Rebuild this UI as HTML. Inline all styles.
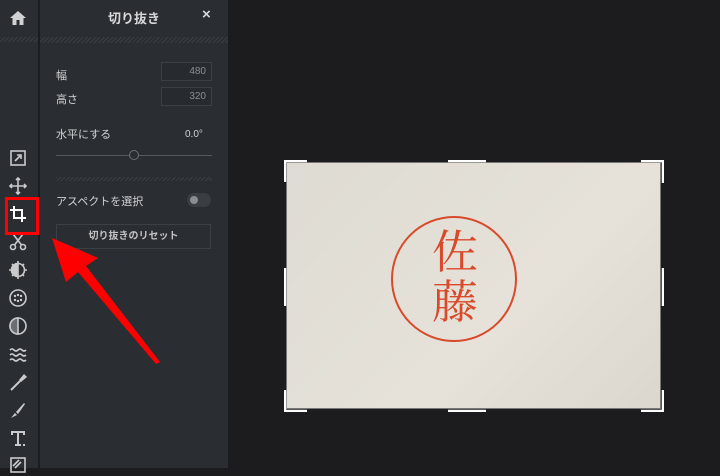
<!DOCTYPE html>
<html><head><meta charset="utf-8"><style>
body{margin:0;width:720px;height:468px;overflow:hidden;background:#1c1c1e;font-family:"Liberation Sans","Noto Sans CJK JP",sans-serif;position:relative}
.a{position:absolute}
#bar{left:0;top:0;width:38px;height:468px;background:#2a2d32;border-right:2px solid #1c1d20}
#panel{left:40px;top:0;width:188px;height:468px;background:#2a2d32}
.hatch{background:repeating-linear-gradient(135deg,#3a3d42 0 1px,#2a2d32 1px 3px)}
.lbl{color:#d0d2d4;font-size:11px}
.inp{border:1px solid #3c3f44;background:#272a2e;color:#8a8d91;font-size:10px;text-align:right;padding-right:5px;box-sizing:border-box;line-height:17px}
svg.i{position:absolute;left:8px;width:20px;height:20px}
</style></head><body>
<div id="bar" class="a"></div>
<div class="a hatch" style="left:0;top:37px;width:38px;height:5px"></div>
<div id="panel" class="a"></div>
<div class="a hatch" style="left:40px;top:37px;width:188px;height:6px"></div>
<div class="a" style="left:40px;top:8px;width:188px;text-align:center;color:#d6d8da;font-weight:bold;font-size:13px">切り抜き</div>
<div class="a" style="left:202px;top:6px;color:#d6d8da;font-size:15px;font-weight:bold">×</div>
<div class="a lbl" style="left:56px;top:67px">幅</div>
<div class="a inp" style="left:161px;top:62px;width:51px;height:19px">480</div>
<div class="a lbl" style="left:56px;top:91px">高さ</div>
<div class="a inp" style="left:161px;top:87px;width:51px;height:19px">320</div>
<div class="a lbl" style="left:56px;top:126px">水平にする</div>
<div class="a lbl" style="left:185px;top:129px;font-size:10px">0.0°</div>
<div class="a" style="left:56px;top:155px;width:156px;height:1px;background:#55585c"></div>
<div class="a" style="left:129px;top:150px;width:8px;height:8px;border:1px solid #6d7074;border-radius:50%;background:#2a2d32"></div>
<div class="a hatch" style="left:56px;top:177px;width:156px;height:4px"></div>
<div class="a lbl" style="left:56px;top:193px">アスペクトを選択</div>
<div class="a" style="left:187px;top:193px;width:24px;height:14px;border-radius:7px;background:#3a3d42"></div>
<div class="a" style="left:190px;top:196px;width:8px;height:8px;border-radius:50%;background:#8a8d91"></div>
<div class="a" style="left:56px;top:224px;width:155px;height:25px;border:1px solid #3c3f44;box-sizing:border-box;color:#c0c2c4;font-size:10px;font-weight:bold;text-align:center;line-height:23px">切り抜きのリセット</div>

<svg class="i" style="top:8px" viewBox="0 0 20 20"><path d="M10 3L2 10h2.5v7h4v-5h3v5h4v-7H18z" fill="#d0d2d4"/></svg>
<svg class="i" style="top:148px" viewBox="0 0 20 20" fill="none" stroke="#c8cacc" stroke-width="1.6"><rect x="3" y="3" width="14" height="14"/><path d="M7 13l6-6M9 7h4v4"/></svg>
<svg class="i" style="top:176px" viewBox="0 0 20 20" fill="none" stroke="#c8cacc" stroke-width="1.6"><path d="M10 2v16M2 10h16M8 4l2-2 2 2M8 16l2 2 2-2M4 8l-2 2 2 2M16 8l2 2-2 2"/></svg>
<svg class="i" style="top:204px" viewBox="0 0 20 20" fill="none" stroke="#fff" stroke-width="2"><path d="M6 2v12h12M2 6h12v12"/></svg>
<svg class="i" style="top:232px" viewBox="0 0 20 20" fill="none" stroke="#c8cacc" stroke-width="1.6"><circle cx="5" cy="15" r="2.5"/><circle cx="15" cy="15" r="2.5"/><path d="M6.5 13L15 2M13.5 13L5 2"/></svg>
<svg class="i" style="top:260px" viewBox="0 0 20 20" fill="none" stroke="#c8cacc" stroke-width="1.6"><circle cx="10" cy="10" r="6.5"/><path d="M10 3.5v13A6.5 6.5 0 0 1 10 3.5z" fill="#c8cacc"/><path d="M10 1v2M10 17v2M1 10h2M17 10h2M4 4l1 1M15 15l1 1M4 16l1-1M15 5l1-1"/></svg>
<svg class="i" style="top:288px" viewBox="0 0 20 20" fill="none" stroke="#c8cacc" stroke-width="1.6"><circle cx="10" cy="10" r="8"/><g fill="#c8cacc" stroke="none"><circle cx="7" cy="8" r="1.2"/><circle cx="10" cy="7" r="1.2"/><circle cx="13" cy="8" r="1.2"/><circle cx="7" cy="12" r="1.2"/><circle cx="10" cy="13" r="1.2"/><circle cx="13" cy="12" r="1.2"/></g></svg>
<svg class="i" style="top:316px" viewBox="0 0 20 20" fill="none" stroke="#c8cacc" stroke-width="1.6"><circle cx="10" cy="10" r="8"/><path d="M10 2a8 8 0 0 0 0 16z" fill="#6a6d71"/></svg>
<svg class="i" style="top:344px" viewBox="0 0 20 20" fill="none" stroke="#c8cacc" stroke-width="1.6"><path d="M2 6q2-2 4 0t4 0 4 0 4 0M2 11q2-2 4 0t4 0 4 0 4 0M2 16q2-2 4 0t4 0 4 0 4 0"/></svg>
<svg class="i" style="top:372px" viewBox="0 0 20 20"><path d="M3 18l9-9" stroke="#c8cacc" stroke-width="2"/><path d="M11 8l5-6 3 3-6 5z" fill="#c8cacc"/></svg>
<svg class="i" style="top:400px" viewBox="0 0 20 20"><path d="M3 18l4-5 2 2z" fill="#c8cacc"/><path d="M8 12l8-9 1 1-7 10z" fill="#c8cacc"/></svg>
<svg class="i" style="top:428px" viewBox="0 0 20 20"><path d="M3 3h14v4h-2V5h-4v11h2v2H7v-2h2V5H5v2H3z" fill="#c8cacc"/><rect x="15" y="16" width="2" height="2" fill="#c8cacc"/></svg>
<svg class="i" style="top:456px" viewBox="0 0 20 20" fill="none" stroke="#c8cacc" stroke-width="1.6"><rect x="3" y="2" width="14" height="14"/><path d="M5 10l6-6M7 12l6-6"/></svg>

<div class="a" style="left:5px;top:197px;width:34px;height:38px;border:3px solid #ff0000;box-sizing:border-box"></div>

<div class="a" style="left:286px;top:162px;width:375px;height:247px;background:linear-gradient(135deg,#dedbd3,#e6e2da 60%,#dbd7cf)"></div>
<div class="a" style="left:286px;top:162px;width:375px;height:247px;border:1px solid #777;box-sizing:border-box"></div>
<svg class="a" style="left:284px;top:160px" width="380" height="252" fill="none" stroke="#fff" stroke-width="2.5">
<path d="M1 22V1h22M357 1h22v22M379 230v21h-22M23 251H1v-21M164 1h38M164 251h38M1 108v38M379 108v38"/></svg>
<div class="a" style="left:391px;top:216px;width:126px;height:126px;border:2.5px solid #d84a2a;border-radius:50%;box-sizing:border-box"></div>
<div class="a" style="left:405px;top:224px;width:100px;color:#d84a2a;font-size:46px;line-height:50px;text-align:center;font-family:'Noto Serif CJK SC',serif;font-weight:normal">佐<br>藤</div>

<svg class="a" style="left:0;top:0" width="240" height="468"><path d="M52 238L98 258 86 266 160 362 156 364 78 272 66 282z" fill="#ff0000"/></svg>
</body></html>
